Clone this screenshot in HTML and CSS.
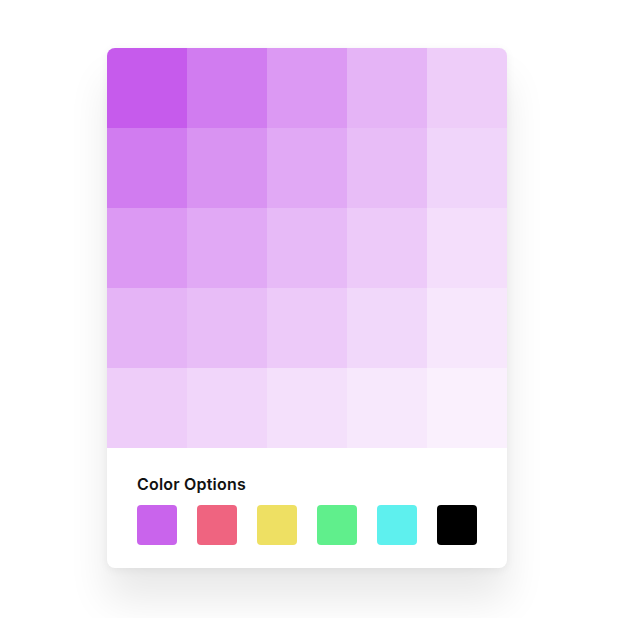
FILE: index.html
```html
<!DOCTYPE html>
<html>
<head>
<meta charset="utf-8">
<link rel="stylesheet" href="styles.css">
</head>
<body>
<div class="card">
  <div class="grid">
    <div class="cell" style="opacity:1"></div>
    <div class="cell" style="opacity:0.8"></div>
    <div class="cell" style="opacity:0.62"></div>
    <div class="cell" style="opacity:0.46"></div>
    <div class="cell" style="opacity:0.3"></div>
    <div class="cell" style="opacity:0.8"></div>
    <div class="cell" style="opacity:0.66"></div>
    <div class="cell" style="opacity:0.52"></div>
    <div class="cell" style="opacity:0.4"></div>
    <div class="cell" style="opacity:0.26"></div>
    <div class="cell" style="opacity:0.62"></div>
    <div class="cell" style="opacity:0.52"></div>
    <div class="cell" style="opacity:0.42"></div>
    <div class="cell" style="opacity:0.32"></div>
    <div class="cell" style="opacity:0.2"></div>
    <div class="cell" style="opacity:0.46"></div>
    <div class="cell" style="opacity:0.4"></div>
    <div class="cell" style="opacity:0.32"></div>
    <div class="cell" style="opacity:0.24"></div>
    <div class="cell" style="opacity:0.15"></div>
    <div class="cell" style="opacity:0.3"></div>
    <div class="cell" style="opacity:0.25"></div>
    <div class="cell" style="opacity:0.19"></div>
    <div class="cell" style="opacity:0.14"></div>
    <div class="cell" style="opacity:0.09"></div>
  </div>
  <div class="options">
    <div class="title">Color Options</div>
    <div class="swatches">
      <div class="swatch purple"></div>
      <div class="swatch red"></div>
      <div class="swatch yellow"></div>
      <div class="swatch green"></div>
      <div class="swatch cyan"></div>
      <div class="swatch black"></div>
    </div>
  </div>
</div>
</body>
</html>
```
FILE: styles.css
```css
html, body {
  margin: 0;
  padding: 0;
  background: #ffffff;
}
body {
  min-height: 618px;
  box-sizing: border-box;
  padding: 48px 0 0 107px;
  font-family: "Inter", "Open Sans", sans-serif;
}
.card {
  width: 400px;
  background: #ffffff;
  border-radius: 8px;
  overflow: hidden;
  box-shadow: 0 32px 40px rgba(0, 0, 0, 0.09), 0 2px 10px rgba(0, 0, 0, 0.06);
}
.grid {
  display: grid;
  grid-template-columns: repeat(5, 80px);
  grid-template-rows: repeat(5, 80px);
}
.cell {
  background: #c65bec;
}
.options {
  height: 120px;
  box-sizing: border-box;
  padding: 24px 30px 0 30px;
}
.title {
  font-size: 16px;
  line-height: 24px;
  font-weight: 600;
  color: #111111;
  letter-spacing: 0.2px;
}
.swatches {
  display: flex;
  gap: 20px;
  margin-top: 9px;
}
.swatch {
  width: 40px;
  height: 40px;
  border-radius: 4px;
}
.purple { background: #c964ec; }
.red { background: #ef6480; }
.yellow { background: #eee063; }
.green { background: #60ef8c; }
.cyan { background: #5ef0ee; }
.black { background: #000000; }
```
